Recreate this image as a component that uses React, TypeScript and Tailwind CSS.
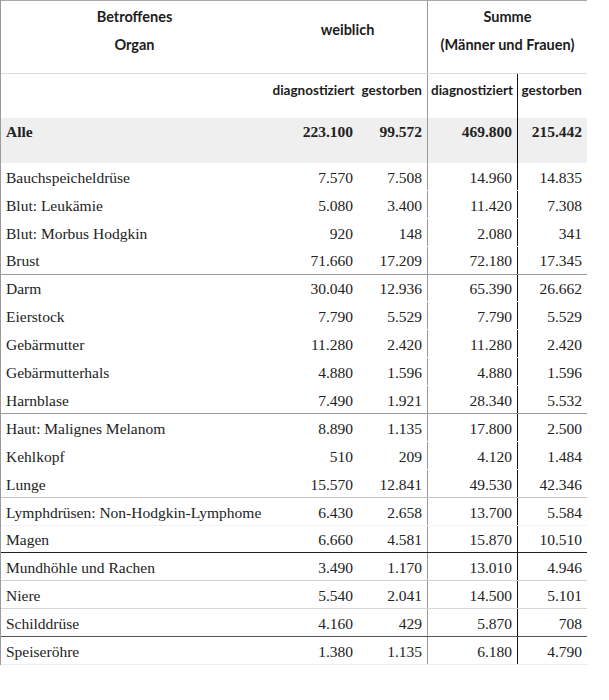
const rows = [
  { name: 'Bauchspeicheldrüse', w: ['7.570', '7.508'], s: ['14.960', '14.835'], line: 'border-b-transparent' },
  { name: 'Blut: Leukämie', w: ['5.080', '3.400'], s: ['11.420', '7.308'], line: 'border-b-transparent' },
  { name: 'Blut: Morbus Hodgkin', w: ['920', '148'], s: ['2.080', '341'], line: 'border-b-transparent' },
  { name: 'Brust', w: ['71.660', '17.209'], s: ['72.180', '17.345'], line: 'border-b-[#9a9a9a]' },
  { name: 'Darm', w: ['30.040', '12.936'], s: ['65.390', '26.662'], line: 'border-b-transparent' },
  { name: 'Eierstock', w: ['7.790', '5.529'], s: ['7.790', '5.529'], line: 'border-b-transparent' },
  { name: 'Gebärmutter', w: ['11.280', '2.420'], s: ['11.280', '2.420'], line: 'border-b-transparent' },
  { name: 'Gebärmutterhals', w: ['4.880', '1.596'], s: ['4.880', '1.596'], line: 'border-b-transparent' },
  { name: 'Harnblase', w: ['7.490', '1.921'], s: ['28.340', '5.532'], line: 'border-b-[#9a9a9a]' },
  { name: 'Haut: Malignes Melanom', w: ['8.890', '1.135'], s: ['17.800', '2.500'], line: 'border-b-transparent' },
  { name: 'Kehlkopf', w: ['510', '209'], s: ['4.120', '1.484'], line: 'border-b-transparent' },
  { name: 'Lunge', w: ['15.570', '12.841'], s: ['49.530', '42.346'], line: 'border-b-[#c4c4c4]' },
  { name: 'Lymphdrüsen: Non-Hodgkin-Lymphome', w: ['6.430', '2.658'], s: ['13.700', '5.584'], line: 'border-b-[#f2f2f2]' },
  { name: 'Magen', w: ['6.660', '4.581'], s: ['15.870', '10.510'], line: 'border-b-[#222222]' },
  { name: 'Mundhöhle und Rachen', w: ['3.490', '1.170'], s: ['13.010', '4.946'], line: 'border-b-[#cfcfcf]' },
  { name: 'Niere', w: ['5.540', '2.041'], s: ['14.500', '5.101'], line: 'border-b-[#d6d6d6]' },
  { name: 'Schilddrüse', w: ['4.160', '429'], s: ['5.870', '708'], line: 'border-b-[#555555]' },
  { name: 'Speiseröhre', w: ['1.380', '1.135'], s: ['6.180', '4.790'], line: 'border-b-[#ececec]' },
];

const head = "font-['Lato',sans-serif] font-bold text-[#1c1c1c]";
const serif = "font-['Liberation_Serif',serif] text-[15.5px] text-[#222]";

export default function App() {
  return (
    <div className="w-[609px] h-[700px] bg-white">
      <div className="w-[587px] border-l border-l-[#9a9a9a]">
        {/* header row 1 */}
        <div className={`flex h-[74px] border-t border-t-[#a8a8a8] border-b border-b-[#dcdcdc] text-[14.5px] ${head}`}>
          <div className="w-[267px] pt-[2px] text-center leading-[28px]">
            <div>Betroffenes</div>
            <div>Organ</div>
          </div>
          <div className="w-[160px] flex items-center justify-center border-r border-r-[#9a9a9a] pb-[14px]">
            weiblich
          </div>
          <div className="w-[159px] pt-[2px] text-center leading-[28px]">
            <div>Summe</div>
            <div>(Männer und Frauen)</div>
          </div>
        </div>

        {/* header row 2 */}
        <div className={`flex h-[44px] leading-[20px] text-[13.5px] ${head}`}>
          <div className="w-[267px]" />
          <div className="w-[90px] pt-[6px] text-center pl-[1px] whitespace-nowrap">diagnostiziert</div>
          <div className="w-[70px] pt-[6px] text-right pr-[5px] border-r border-r-[#9a9a9a]">gestorben</div>
          <div className="w-[90px] pt-[6px] text-right pr-[4px] border-r border-r-[#111] whitespace-nowrap">diagnostiziert</div>
          <div className="w-[69px] pt-[6px] text-right pr-[5px]">gestorben</div>
        </div>

        {/* Alle */}
        <div className={`flex h-[45px] bg-[#efefef] leading-[20px] font-bold ${serif}`}>
          <div className="w-[267px] pl-[5px] pt-[4px]">Alle</div>
          <div className="w-[90px] text-right pr-[5px] pt-[4px]">223.100</div>
          <div className="w-[70px] text-right pr-[5px] pt-[4px] border-r border-r-[#9a9a9a]">99.572</div>
          <div className="w-[90px] text-right pr-[5px] pt-[4px] border-r border-r-[#111]">469.800</div>
          <div className="w-[69px] text-right pr-[5px] pt-[4px]">215.442</div>
        </div>

        {rows.map((r, i) => (
          <div key={i} className={`flex h-[27.9px] border-b ${r.line} ${serif}`}>
            <div className="w-[267px] pl-[5px] pt-[2px] flex items-center whitespace-nowrap">{r.name}</div>
            <div className="w-[90px] pr-[5px] pt-[2px] flex items-center justify-end">{r.w[0]}</div>
            <div className="w-[70px] pr-[5px] pt-[2px] flex items-center justify-end border-r border-r-[#9a9a9a]">{r.w[1]}</div>
            <div className="w-[90px] pr-[5px] pt-[2px] flex items-center justify-end border-r border-r-[#111]">{r.s[0]}</div>
            <div className="w-[69px] pr-[5px] pt-[2px] flex items-center justify-end">{r.s[1]}</div>
          </div>
        ))}
      </div>
    </div>
  );
}
